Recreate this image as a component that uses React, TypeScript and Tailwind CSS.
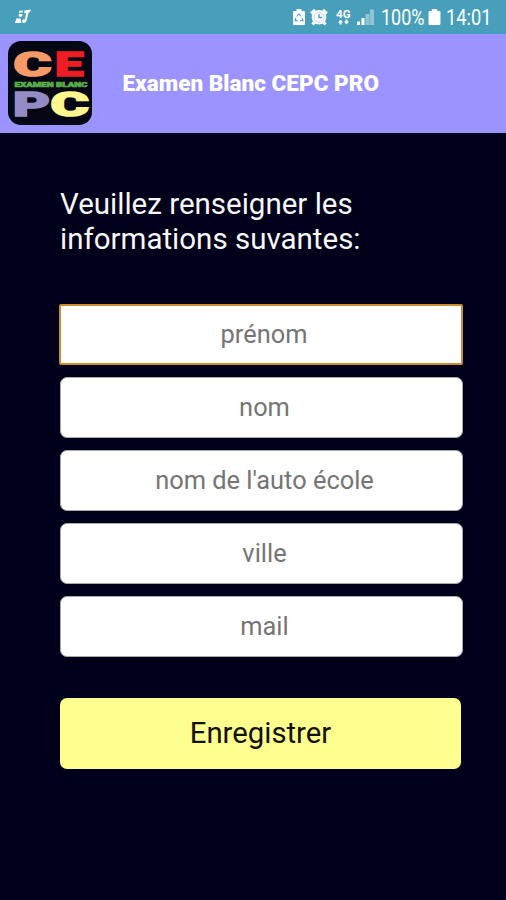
import React from "react";

function MusicNote() {
  return (
    <svg width="18" height="18" viewBox="0 0 18 18" className="ml-[14px]" fill="#fff">
      <path d="M10.500 2.500 17 1.5 15.7 4.2 14.500 4.6 12.7 12.5Q11.6 15.3 9.4 15 7.5 14.3 8.3 12.3 9.2 10.8 11 11.4L12 4.800 10 5Z" />
      <path d="M5.3 2.800 9 2.400 8.600 4.600 4.8 4.8Z" />
      <path d="M4.6 6H8.700Q8.500 8.900 6.600 9 4.5 8.900 4.6 6Z" />
      <path d="M2.6 10.300 6.500 10.500 7.500 15H.8Z" />
    </svg>
  );
}

function StatusBar() {
  return (
    <header className="flex h-[34px] items-center bg-[#489fbc] text-white">
      <MusicNote />
      <svg width="14" height="18" viewBox="0 0 14 18" className="ml-auto">
        <path d="M4.5 1h5v2H12q1 0 1 1v12q0 1-1 1H2q-1 0-1-1V4q0-1 1-1h2.500Z" fill="#fff" />
        <path d="M4.700 8.500 7 6l2.300 2.500M10 10l1 2.800H8M6 12.800H3l1-2.800" fill="none" stroke="#489fbc" strokeWidth="1.100" />
      </svg>
      <svg width="18" height="18" viewBox="0 0 18 18" className="ml-[4px]">
        <circle cx="9" cy="9.300" r="7.300" fill="#fff" />
        <path d="M1 5.500 5 1.800M17 5.500l-4-3.700M4.500 14l-2 2.500M13.500 14l2 2.500" stroke="#fff" strokeWidth="3" />
        <circle cx="9" cy="9.300" r="5" fill="none" stroke="#489fbc" strokeWidth=".7" opacity=".5" />
        <path d="M9 6v3.500h3" fill="none" stroke="#489fbc" strokeWidth="1.300" />
      </svg>
      <svg width="17" height="22" viewBox="0 -2 17 22" className="ml-[8px]" fill="#fff">
        <text x="0" y="9.500" fontFamily="Roboto, sans-serif" fontWeight="700" fontSize="11" textLength="14.500" lengthAdjust="spacingAndGlyphs">4G</text>
        <path d="M2 14.500 4.500 11.500l2.500 3H5.500v2h-2v-2ZM8 13.500h1.500v-2h2v2H13L10.500 16.500Z" />
      </svg>
      <svg width="18" height="18" viewBox="0 0 18 18" className="ml-[4px]" fill="#fff">
        <rect x="0" y="13.500" width="3" height="3.500" />
        <rect x="4.500" y="10" width="3" height="7" />
        <rect x="8.500" y="6" width="4" height="11" opacity=".4" />
        <rect x="13" y="1.500" width="4" height="15.500" opacity=".4" />
      </svg>
      <svg width="52" height="32" viewBox="0 -6 52 32" className="-mr-[5px] ml-[6px]" fill="#fff">
        <text x="0" y="17.500" fontFamily="Roboto, sans-serif" fontSize="21.500" textLength="43.500" lengthAdjust="spacingAndGlyphs">100%</text>
      </svg>
      <svg width="13" height="18" viewBox="0 0 12 18" preserveAspectRatio="none" fill="#fff">
        <path d="M3.500 1h5v2h1.700q1.300 0 1.300 1.300v11.400q0 1.300-1.300 1.300H1.800Q.5 17 .5 15.700V4.300Q.5 3 1.800 3h1.700Z" />
      </svg>
      <svg width="54" height="32" viewBox="0 -6 54 32" className="mr-[6px] ml-[5px]" fill="#fff">
        <text x="0" y="17.500" fontFamily="Roboto, sans-serif" fontSize="21.500" textLength="45.500" lengthAdjust="spacingAndGlyphs">14:01</text>
      </svg>
    </header>
  );
}

function Logo() {
  return (
    <svg width="84" height="84" viewBox="0 0 84 84" className="mb-[1px] ml-[7.500px] shrink-0" fontFamily="Roboto, sans-serif" fontWeight="900">
      <rect width="84" height="84" rx="13" fill="#060715" />
      <g fontSize="33" strokeWidth="1.500">
        <text x="5.500" y="34.500" textLength="38" lengthAdjust="spacingAndGlyphs" fill="#f69b68" stroke="#f69b68">C</text>
        <text x="47" y="34.500" textLength="28.500" lengthAdjust="spacingAndGlyphs" fill="#ee1c25" stroke="#ee1c25">E</text>
        <text x="5" y="74.500" textLength="37" lengthAdjust="spacingAndGlyphs" fill="#938bc5" stroke="#938bc5">P</text>
        <text x="42.500" y="74.500" textLength="38.500" lengthAdjust="spacingAndGlyphs" fill="#fdf58d" stroke="#fdf58d">C</text>
      </g>
      <text x="6.500" y="45.500" fontSize="7" textLength="73" lengthAdjust="spacingAndGlyphs" fill="#58b047" stroke="#58b047" strokeWidth=".6">EXAMEN BLANC</text>
    </svg>
  );
}

const fields = ["prénom", "nom", "nom de l'auto école", "ville", "mail"];

export default function App() {
  return (
    <div className="flex h-[900px] w-[506px] flex-col overflow-hidden bg-[#00001a] font-['Roboto',sans-serif]">
      <StatusBar />
      <div className="flex h-[99px] items-center bg-[#9b93ff]">
        <Logo />
        <h1 className="ml-[31px] text-[22.550px] font-black whitespace-nowrap text-white">Examen Blanc CEPC PRO</h1>
      </div>
      <main className="flex flex-col pt-[54px] pr-[44px] pl-[60px]">
        <p className="text-[29.500px] leading-[34.500px] whitespace-nowrap text-[#f7f7f7]">
          Veuillez renseigner les
          <br />
          informations suvantes:
        </p>
        <form className="mt-[47.500px] flex flex-col gap-[12.200px]">
          {fields.map((field, index) => (
            <input
              key={field}
              aria-label={field}
              placeholder={field}
              className={
                index === 0
                  ? "-ml-[1px] h-[61px] w-[404px] rounded-[2px] border-2 border-[#c98a30] bg-white pb-[1px] pl-[6px] text-center text-[25.400px] outline-none placeholder:text-[#757575]"
                  : "h-[61px] w-[403px] rounded-[7px] border border-[#a9a9a9] bg-white pb-[1px] pl-[6px] text-center text-[25.400px] outline-none placeholder:text-[#757575]"
              }
            />
          ))}
          <button type="button" className="mt-[28.500px] h-[71px] w-[401px] rounded-[7px] bg-[#ffff8f] pt-[1px] text-[29.300px] text-[#111100]">
            Enregistrer
          </button>
        </form>
      </main>
    </div>
  );
}
